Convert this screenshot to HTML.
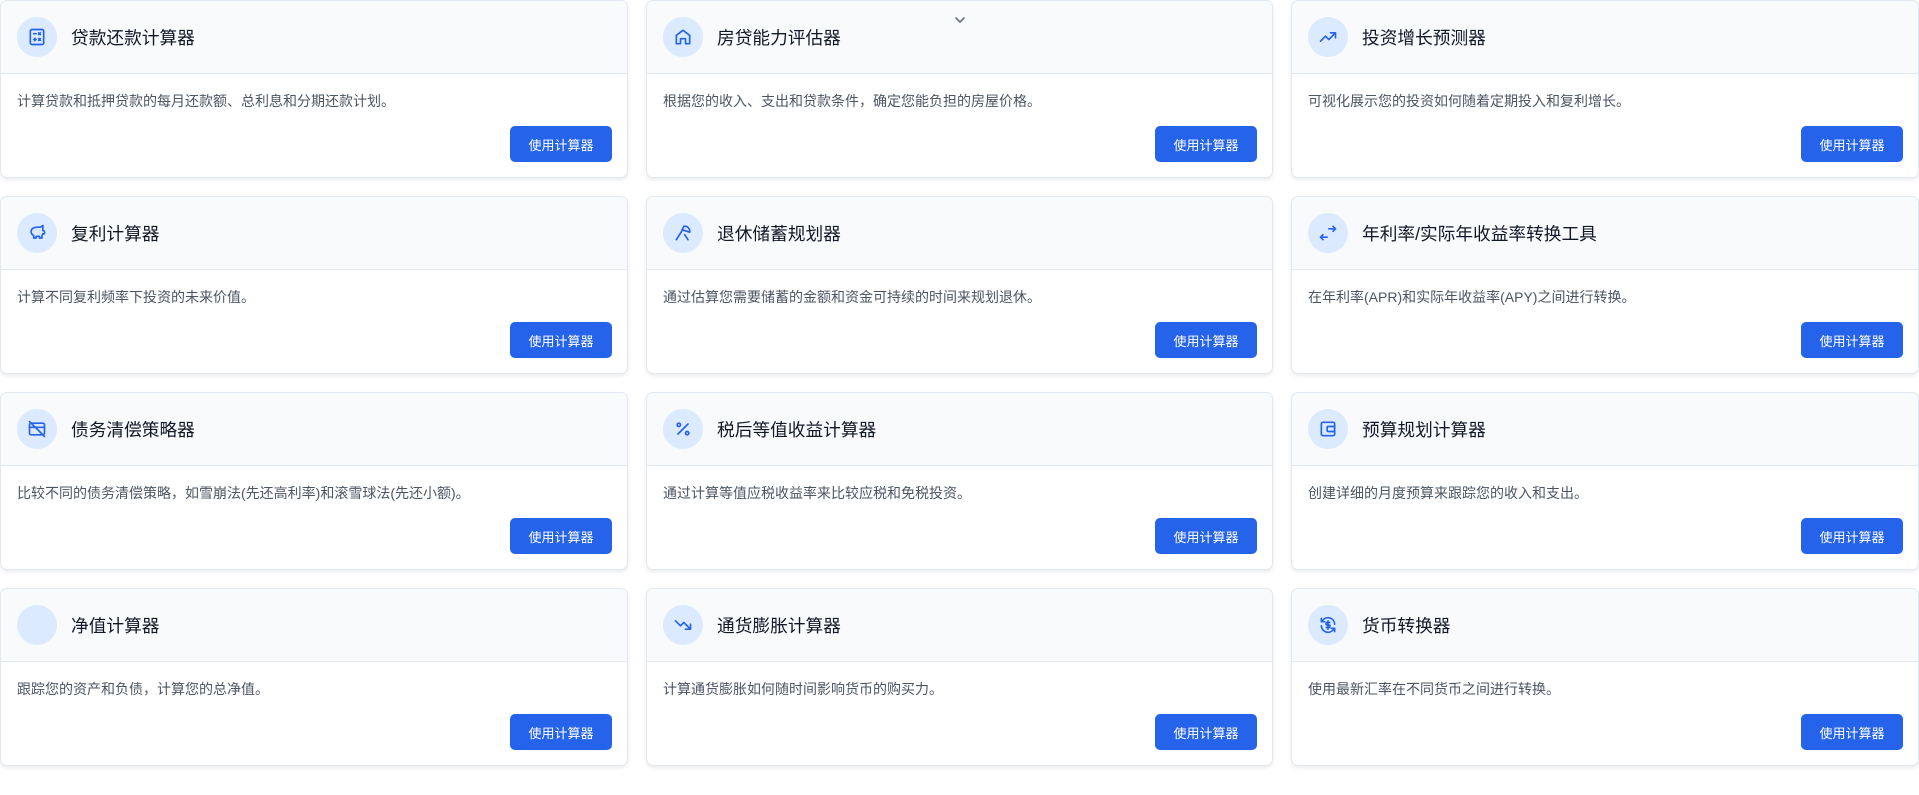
<!DOCTYPE html>
<html><head><meta charset="utf-8"><style>
*{box-sizing:border-box;margin:0;padding:0}
body{width:1919px;height:795px;background:#fff;font-family:"Liberation Sans","Noto Sans CJK SC",sans-serif;position:relative;overflow:hidden}
.card{position:absolute;width:628px;height:178px;border:1px solid #e2e8f0;border-radius:7px;background:#fff;box-shadow:0 2px 4px rgba(0,0,0,.08);overflow:hidden}
.hd{height:73px;background:#f8fafc;border-bottom:1px solid #e2e8f0;display:flex;align-items:center;padding-left:16px}
.ic{width:40px;height:40px;border-radius:50%;background:#dbeafe;display:flex;align-items:center;justify-content:center;margin-right:14px;flex:none}
.ic svg{width:20px;height:20px;fill:none;stroke:#2563eb;stroke-width:2;stroke-linecap:round;stroke-linejoin:round}
.t{font-size:17.7px;color:#111827}
.d{position:absolute;left:16px;top:90px;font-size:14px;color:#4b5563}
.b{position:absolute;right:15px;top:125px;width:102px;height:36px;background:#2563eb;color:#fff;border-radius:5px;font-size:13px;display:flex;align-items:center;justify-content:center}
.chev{position:absolute;left:954px;top:16px;width:12px;height:8px}
</style></head><body>
<svg class="chev" viewBox="0 0 12 8" style="z-index:5"><path d="M2 2l4 4 4-4" fill="none" stroke="#6b7280" stroke-width="1.6" stroke-linecap="round"/></svg>

<div class="card" style="left:0;top:0"><div class="hd"><div class="ic"><svg viewBox="0 0 24 24"><rect x="4" y="3" width="16" height="18" rx="2"/><path d="M8 8h3M14 7l2 2M16 7l-2 2M8 15h3M9.5 13.5v3M14 14h2M14 16h2"/></svg></div><div class="t">贷款还款计算器</div></div><div class="d">计算贷款和抵押贷款的每月还款额、总利息和分期还款计划。</div><div class="b">使用计算器</div></div>
<div class="card" style="left:646px;top:0;width:627px"><div class="hd"><div class="ic"><svg viewBox="0 0 24 24"><path d="M4 10l8-6 8 6v10h-5v-6h-6v6H4z"/></svg></div><div class="t">房贷能力评估器</div></div><div class="d">根据您的收入、支出和贷款条件，确定您能负担的房屋价格。</div><div class="b">使用计算器</div></div>
<div class="card" style="left:1291px;top:0"><div class="hd"><div class="ic"><svg viewBox="0 0 24 24"><path d="M3 17l6-6 4 4 8-8M15 7h6v6"/></svg></div><div class="t">投资增长预测器</div></div><div class="d">可视化展示您的投资如何随着定期投入和复利增长。</div><div class="b">使用计算器</div></div>

<div class="card" style="left:0;top:196px"><div class="hd"><div class="ic"><svg viewBox="0 0 24 24"><path d="M19 9c1 0 2 1 2 2v2h-2l-1 2v3h-3v-2h-4v2H8v-3c-2-1-3-3-3-5 0-3 3-5 7-5h4l3-2v4z"/></svg></div><div class="t">复利计算器</div></div><div class="d">计算不同复利频率下投资的未来价值。</div><div class="b">使用计算器</div></div>
<div class="card" style="left:646px;top:196px;width:627px"><div class="hd"><div class="ic"><svg viewBox="0 0 24 24"><path d="M13 4a6 6 0 0 1 7 7l-9-3zM11 9l-7 11M14 14l4 6"/></svg></div><div class="t">退休储蓄规划器</div></div><div class="d">通过估算您需要储蓄的金额和资金可持续的时间来规划退休。</div><div class="b">使用计算器</div></div>
<div class="card" style="left:1291px;top:196px"><div class="hd"><div class="ic"><svg viewBox="0 0 24 24"><path d="M13 7h8M18 4l3 3-3 3M11 17H3M6 14l-3 3 3 3"/></svg></div><div class="t">年利率/实际年收益率转换工具</div></div><div class="d">在年利率(APR)和实际年收益率(APY)之间进行转换。</div><div class="b">使用计算器</div></div>

<div class="card" style="left:0;top:392px"><div class="hd"><div class="ic"><svg viewBox="0 0 24 24"><rect x="3" y="5" width="18" height="14" rx="2"/><path d="M3 10h18M3 3l18 18"/></svg></div><div class="t">债务清偿策略器</div></div><div class="d">比较不同的债务清偿策略，如雪崩法(先还高利率)和滚雪球法(先还小额)。</div><div class="b">使用计算器</div></div>
<div class="card" style="left:646px;top:392px;width:627px"><div class="hd"><div class="ic"><svg viewBox="0 0 24 24"><path d="M18 6L6 18"/><circle cx="7" cy="7" r="2"/><circle cx="17" cy="17" r="2"/></svg></div><div class="t">税后等值收益计算器</div></div><div class="d">通过计算等值应税收益率来比较应税和免税投资。</div><div class="b">使用计算器</div></div>
<div class="card" style="left:1291px;top:392px"><div class="hd"><div class="ic"><svg viewBox="0 0 24 24"><rect x="4" y="4" width="16" height="16" rx="2"/><rect x="11" y="9" width="9" height="6" rx="1"/></svg></div><div class="t">预算规划计算器</div></div><div class="d">创建详细的月度预算来跟踪您的收入和支出。</div><div class="b">使用计算器</div></div>

<div class="card" style="left:0;top:588px"><div class="hd"><div class="ic"></div><div class="t">净值计算器</div></div><div class="d">跟踪您的资产和负债，计算您的总净值。</div><div class="b">使用计算器</div></div>
<div class="card" style="left:646px;top:588px;width:627px"><div class="hd"><div class="ic"><svg viewBox="0 0 24 24"><path d="M3 7l6 6 4-4 8 8M15 17h6v-6"/></svg></div><div class="t">通货膨胀计算器</div></div><div class="d">计算通货膨胀如何随时间影响货币的购买力。</div><div class="b">使用计算器</div></div>
<div class="card" style="left:1291px;top:588px"><div class="hd"><div class="ic"><svg viewBox="0 0 24 24"><path d="M20 11a8 8 0 0 0-14-5L4 8M4 4v4h4M4 13a8 8 0 0 0 14 5l2-2M20 20v-4h-4M14 9h-3a1.5 1.5 0 0 0 0 3h2a1.5 1.5 0 0 1 0 3h-3M12 7v10"/></svg></div><div class="t">货币转换器</div></div><div class="d">使用最新汇率在不同货币之间进行转换。</div><div class="b">使用计算器</div></div>
</body></html>
